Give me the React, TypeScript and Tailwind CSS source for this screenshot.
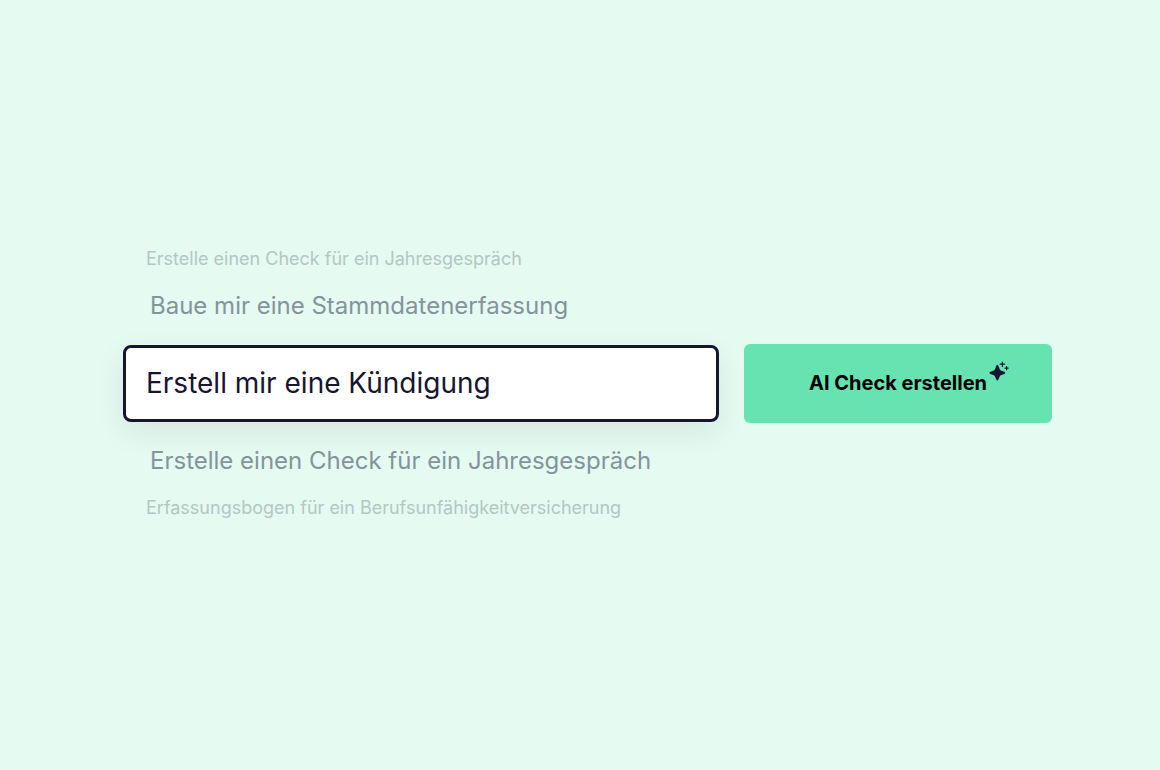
const before = [
  { text: "Erstelle einen Check für ein Jahresgespräch", far: true },
  { text: "Baue mir eine Stammdatenerfassung", far: false },
];

const after = [
  { text: "Erstelle einen Check für ein Jahresgespräch", far: false },
  { text: "Erfassungsbogen für ein Berufsunfähigkeitversicherung", far: true },
];

const SparkleIcon = () => (
  <svg viewBox="0 0 20 20" className="h-5 w-5" fill="#171530" aria-hidden="true">
    <path d="M7.500 4.200Q8.300 3.400 9.100 4.200L10.700 8.300Q11 9.200 11.900 9.600L15.800 11.100Q16.600 11.900 15.800 12.700L11.900 14.200Q11 14.600 10.700 15.500L9.100 19Q8.300 19.800 7.500 19L6 15.500Q5.700 14.600 4.800 14.200L0.900 12.700Q0.100 11.900 0.900 11.100L4.800 9.600Q5.700 9.200 6 8.300Z" />
    <path
      d="M13.400 1V5.400M11.200 3.200H15.600M17.600 5.500V8.700M16 7.100H19.200"
      stroke="#171530"
      strokeWidth="1.200"
      strokeLinecap="round"
    />
  </svg>
);

type SuggestionProps = {
  text: string;
  far: boolean;
};

const Suggestion = ({ text, far }: SuggestionProps) => (
  <li
    className={
      far
        ? "pl-[23px] text-lg leading-7 text-[#b3c7c5]"
        : "pl-[27px] text-2xl leading-8 text-[#84949b]"
    }
  >
    {text}
  </li>
);

const App = () => {
  return (
    <main className="flex min-h-screen items-center bg-[#e5faf1] pr-[108px] pb-1 pl-[123px] font-['Inter',sans-serif]">
      <form className="w-full" onSubmit={(e) => e.preventDefault()}>
        <ul className="flex flex-col gap-[17px]">
          {before.map((item) => (
            <Suggestion key={item.text} {...item} />
          ))}
        </ul>
        <div className="my-[22px] flex items-center gap-[25px]">
          <input
            type="text"
            aria-label="Beschreibung"
            defaultValue="Erstell mir eine Kündigung"
            className="h-[77px] min-w-0 flex-1 rounded-lg border-3 border-[#171530] bg-white px-5 text-[28px] text-[#171530] shadow-[0_10px_30px_rgba(23,21,48,0.08)] outline-none"
          />
          <button
            type="submit"
            className="flex h-[79px] w-[308px] items-center justify-center rounded-md bg-[#66e3b1] text-xl font-bold text-black"
          >
            <span className="relative">
              AI Check erstellen
              <span className="absolute -top-2 left-full ml-0.5">
                <SparkleIcon />
              </span>
            </span>
          </button>
        </div>
        <ul className="flex flex-col gap-[17px]">
          {after.map((item) => (
            <Suggestion key={item.text} {...item} />
          ))}
        </ul>
      </form>
    </main>
  );
};

export default App;
